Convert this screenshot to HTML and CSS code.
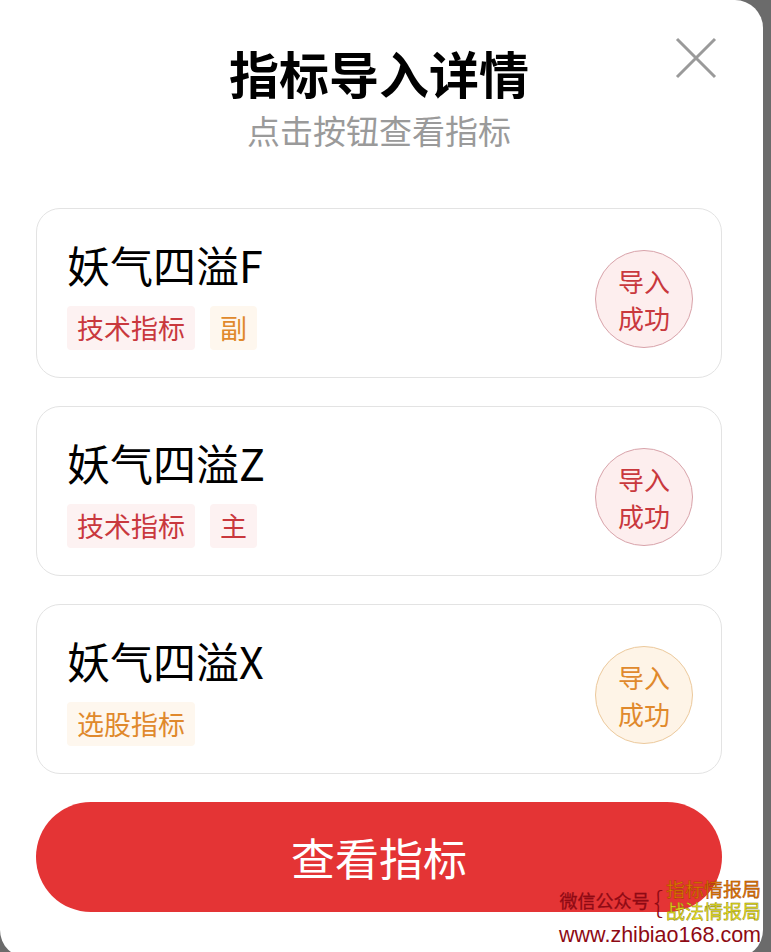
FILE: index.html
```html
<!DOCTYPE html>
<html lang="zh-CN">
<head>
    <meta charset="UTF-8">
    <meta name="viewport" content="width=device-width, initial-scale=1.0">
    <link rel="stylesheet" href="styles.css">
    <title>指标导入详情</title>
</head>
<body>
    <div class="sheet">
        <button class="close" aria-label="关闭">
            <svg width="42" height="42" viewBox="0 0 42 42">
                <path d="M2 2 L40 40 M40 2 L2 40" stroke="#9a9a9a" stroke-width="3" fill="none"/>
            </svg>
        </button>

        <div class="head">
            <div class="title">指标导入详情</div>
            <div class="subtitle">点击按钮查看指标</div>
        </div>

        <div class="list">
            <div class="card">
                <div class="info">
                    <div class="name">妖气四溢F</div>
                    <div class="tags">
                        <span class="tag red">技术指标</span>
                        <span class="tag orange">副</span>
                    </div>
                </div>
                <div class="status red">导入<br>成功</div>
            </div>

            <div class="card">
                <div class="info">
                    <div class="name">妖气四溢Z</div>
                    <div class="tags">
                        <span class="tag red">技术指标</span>
                        <span class="tag red">主</span>
                    </div>
                </div>
                <div class="status red">导入<br>成功</div>
            </div>

            <div class="card">
                <div class="info">
                    <div class="name">妖气四溢X</div>
                    <div class="tags">
                        <span class="tag orange">选股指标</span>
                    </div>
                </div>
                <div class="status orange">导入<br>成功</div>
            </div>
        </div>

        <button class="view-btn">查看指标</button>

        <div class="watermark">
            <div class="wm-row">
                <span class="wm-label">微信公众号</span>
                <span class="wm-brace">{</span>
                <span class="wm-names">
                    <span class="wm-a">指标情报局</span>
                    <span class="wm-b">战法情报局</span>
                </span>
            </div>
            <div class="wm-url">www.zhibiao168.com</div>
        </div>
    </div>
</body>
</html>
```

FILE: styles.css
```css
body {
    margin: 0;
    background-color: #6b6b6b;
    font-family: "Noto Sans CJK SC", "Noto Sans", sans-serif;
    overflow: hidden;
}

.sheet {
    position: relative;
    width: 763px;
    height: 958px;
    background-color: #fff;
    border-radius: 0 28px 28px 28px;
    box-sizing: border-box;
    padding: 42px 41px 0 36px;
}

.close {
    position: absolute;
    top: 37px;
    right: 46px;
    padding: 0;
    border: none;
    background: none;
    cursor: pointer;
}

.head {
    text-align: center;
}

.title {
    font-size: 50px;
    font-weight: bold;
    line-height: 60px;
    color: #000;
}

.subtitle {
    margin-top: 6px;
    font-size: 33px;
    line-height: 44px;
    color: #9a9a9a;
}

.list {
    margin-top: 56px;
    display: flex;
    flex-direction: column;
    gap: 28px;
}

.card {
    height: 170px;
    box-sizing: border-box;
    border: 1px solid #e3e3e3;
    border-radius: 24px;
    padding: 0 28px 0 30px;
    display: flex;
    justify-content: space-between;
    align-items: center;
}

.info {
    display: flex;
    flex-direction: column;
    gap: 18px;
    margin-top: 4px;
}

.name {
    font-size: 43px;
    line-height: 48px;
    color: #000;
}

.tags {
    display: flex;
    gap: 15px;
}

.tag {
    height: 44px;
    line-height: 44px;
    padding: 0 10px;
    font-size: 27px;
    border-radius: 4px;
}

.tag.red {
    color: #c9383d;
    background-color: #fdf2f2;
}

.tag.orange {
    color: #e0892c;
    background-color: #fef7ee;
}

.status {
    width: 98px;
    height: 98px;
    box-sizing: border-box;
    margin-top: 12px;
    border-radius: 50%;
    display: flex;
    align-items: center;
    justify-content: center;
    text-align: center;
    font-size: 26px;
    line-height: 37px;
}

.status.red {
    color: #c9383d;
    background-color: #fdeeee;
    border: 1px solid #d8a3aa;
}

.status.orange {
    color: #e0892c;
    background-color: #fef4e7;
    border: 1px solid #ecc99c;
}

.view-btn {
    display: block;
    width: 100%;
    height: 110px;
    margin-top: 28px;
    border: none;
    border-radius: 55px;
    background-color: #e43435;
    color: #fff;
    font-family: inherit;
    font-size: 44px;
    cursor: pointer;
}

.watermark {
    position: absolute;
    right: 2px;
    bottom: 10px;
    text-align: right;
}

.wm-row {
    display: flex;
    align-items: center;
    justify-content: flex-end;
}

.wm-label {
    font-size: 18px;
    color: #8e0a14;
    -webkit-text-stroke: 0.3px #8e0a14;
}

.wm-brace {
    font-size: 30px;
    line-height: 40px;
    color: #8e0a14;
    margin: 0 3px 0 4px;
    font-weight: 200;
}

.wm-names {
    display: flex;
    flex-direction: column;
    font-size: 19px;
    line-height: 22px;
}

.wm-a {
    color: #e07a00;
    -webkit-text-stroke: 0.4px #9a3a00;
}

.wm-b {
    color: #e6e020;
    -webkit-text-stroke: 0.4px #8a8000;
}

.wm-url {
    font-family: "Liberation Sans", sans-serif;
    font-size: 21.5px;
    line-height: 26px;
    color: #8e0a14;
}
```
